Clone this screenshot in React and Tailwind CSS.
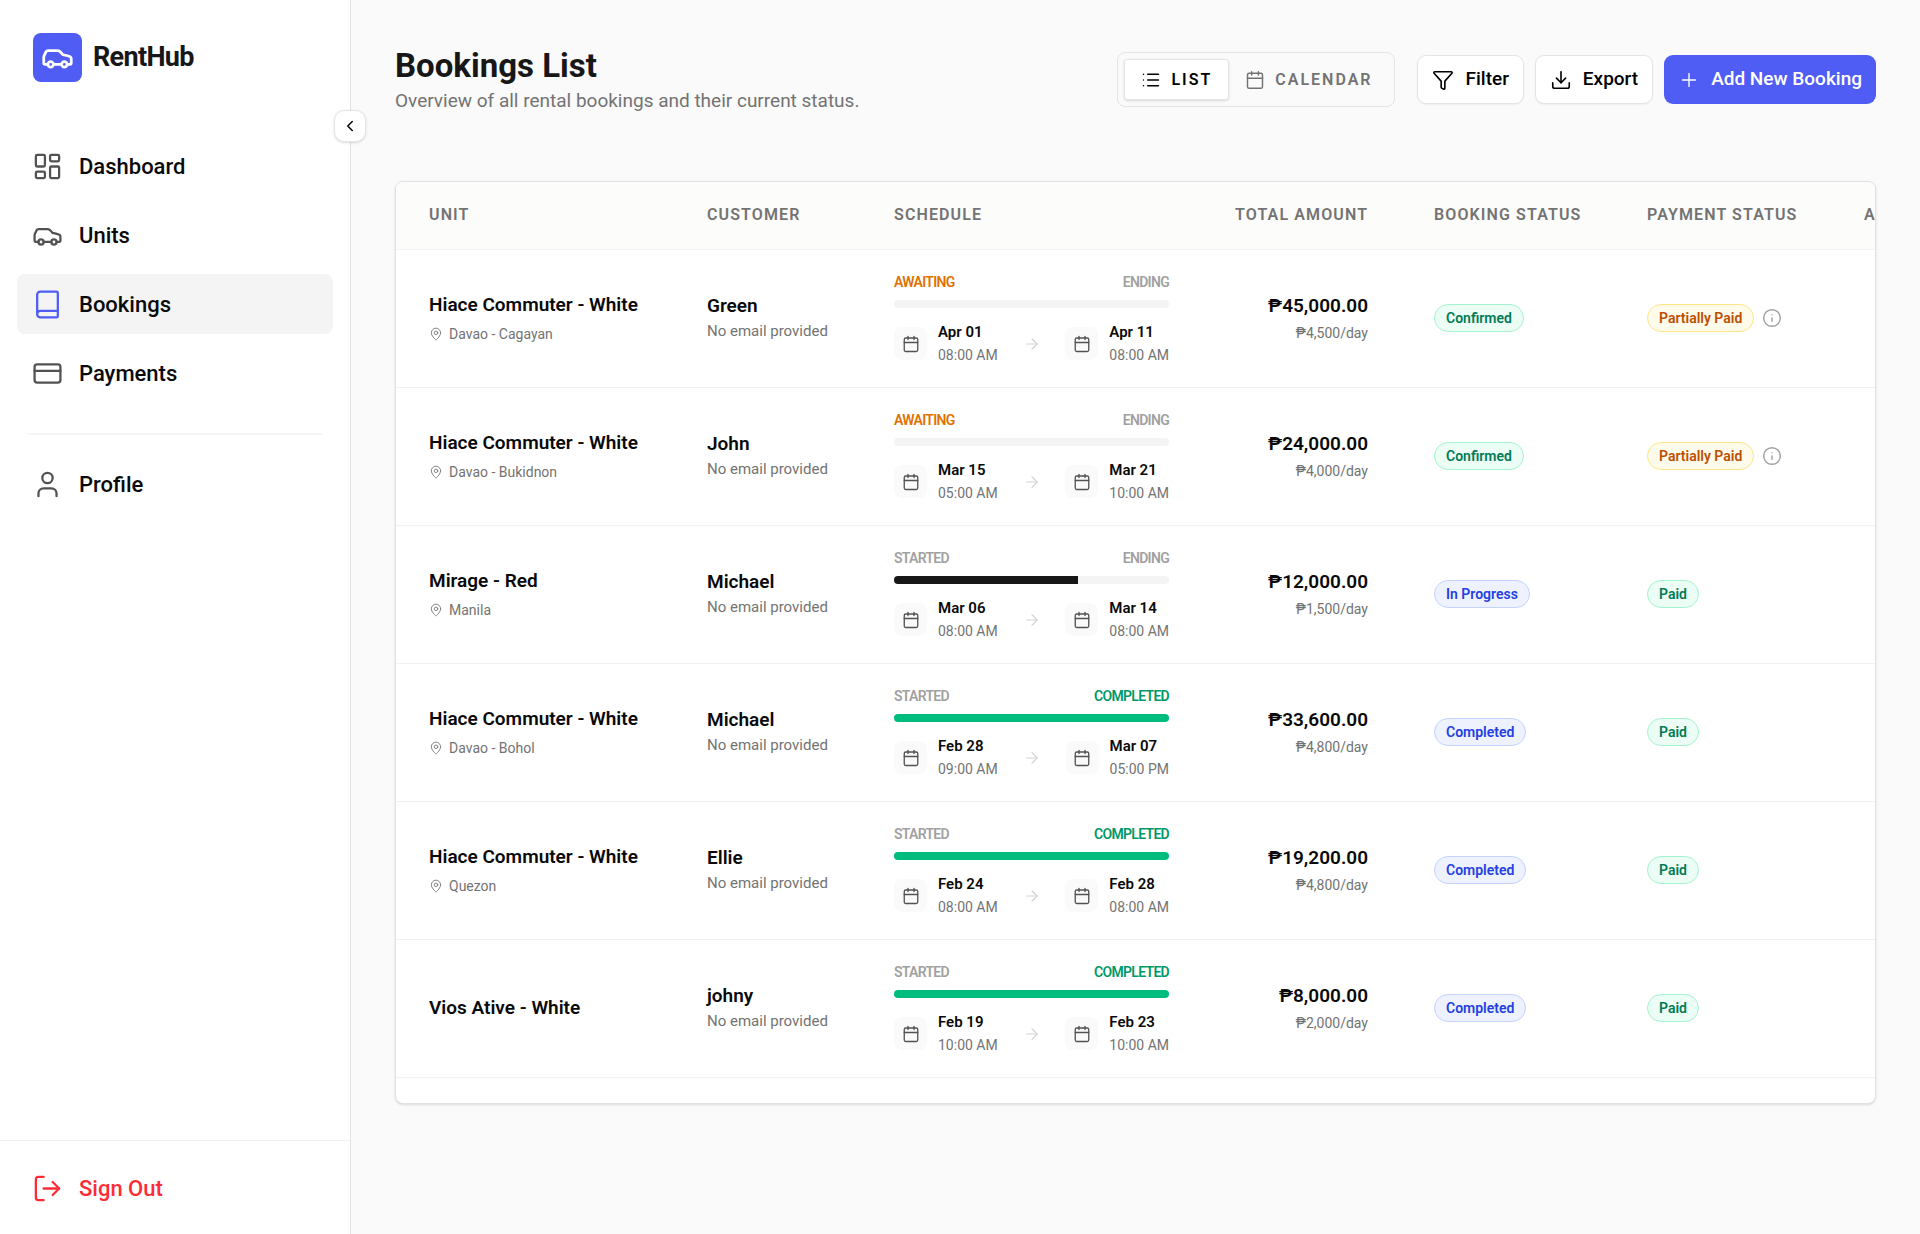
import {
  ArrowRight, Book, Calendar, Car, ChevronLeft, CreditCard, Download, Funnel,
  Info, LayoutDashboard, List, LogOut, MapPin, Plus, User,
} from 'lucide-react';

const navItems = [
  { label: 'Dashboard', icon: LayoutDashboard },
  { label: 'Units', icon: Car },
  { label: 'Bookings', icon: Book, active: true },
  { label: 'Payments', icon: CreditCard },
];

const bookings = [
  { unit: 'Hiace Commuter - White', place: 'Davao - Cagayan', customer: 'Green', state: 'awaiting', progress: 0, from: ['Apr 01', '08:00 AM'], to: ['Apr 11', '08:00 AM'], total: '₱45,000.00', rate: '₱4,500/day', status: 'Confirmed', payment: 'Partially Paid' },
  { unit: 'Hiace Commuter - White', place: 'Davao - Bukidnon', customer: 'John', state: 'awaiting', progress: 0, from: ['Mar 15', '05:00 AM'], to: ['Mar 21', '10:00 AM'], total: '₱24,000.00', rate: '₱4,000/day', status: 'Confirmed', payment: 'Partially Paid' },
  { unit: 'Mirage - Red', place: 'Manila', customer: 'Michael', state: 'started', progress: 67, from: ['Mar 06', '08:00 AM'], to: ['Mar 14', '08:00 AM'], total: '₱12,000.00', rate: '₱1,500/day', status: 'In Progress', payment: 'Paid' },
  { unit: 'Hiace Commuter - White', place: 'Davao - Bohol', customer: 'Michael', state: 'completed', progress: 100, from: ['Feb 28', '09:00 AM'], to: ['Mar 07', '05:00 PM'], total: '₱33,600.00', rate: '₱4,800/day', status: 'Completed', payment: 'Paid' },
  { unit: 'Hiace Commuter - White', place: 'Quezon', customer: 'Ellie', state: 'completed', progress: 100, from: ['Feb 24', '08:00 AM'], to: ['Feb 28', '08:00 AM'], total: '₱19,200.00', rate: '₱4,800/day', status: 'Completed', payment: 'Paid' },
  { unit: 'Vios Ative - White', customer: 'johny', state: 'completed', progress: 100, from: ['Feb 19', '10:00 AM'], to: ['Feb 23', '10:00 AM'], total: '₱8,000.00', rate: '₱2,000/day', status: 'Completed', payment: 'Paid' },
];

const badgeTones = {
  Confirmed: 'border-emerald-200 bg-emerald-50 text-emerald-700',
  Paid: 'border-emerald-200 bg-emerald-50 text-emerald-700',
  'Partially Paid': 'border-amber-200 bg-amber-50 text-amber-700',
  'In Progress': 'border-indigo-200 bg-indigo-50 text-[#2440e0]',
  Completed: 'border-indigo-200 bg-indigo-50 text-[#2440e0]',
};

function NavLink({ label, icon: Icon, active }) {
  return (
    <a
      href="#"
      aria-current={active ? 'page' : undefined}
      className={`flex h-[60px] items-center gap-4 rounded-lg px-[15px] text-[22px] font-medium text-neutral-950 ${active ? 'bg-[#f4f4f4]' : ''}`}
    >
      <Icon size={31} strokeWidth={1.75} className={active ? 'text-[#4f5df5]' : 'text-neutral-600'} />
      {label}
    </a>
  );
}

function Sidebar() {
  return (
    <aside className="relative flex w-[351px] shrink-0 flex-col border-r border-[#e2e2e2] bg-white">
      <div className="flex items-center gap-[11px] px-[33px] pt-[33px]">
        <span className="flex size-[49px] items-center justify-center rounded-lg bg-[#4f5df5] text-white">
          <Car size={33} strokeWidth={2} />
        </span>
        <span className="text-[27px] font-bold tracking-tight text-neutral-900">RentHub</span>
      </div>
      <button
        type="button"
        aria-label="Collapse sidebar"
        className="absolute top-[110px] -right-4 flex size-8 items-center justify-center rounded-[10px] border border-[#e5e5e5] bg-white text-black shadow-sm"
      >
        <ChevronLeft size={18} strokeWidth={2} />
      </button>
      <nav className="mt-[54px] flex flex-col gap-[9px] px-[17px]">
        {navItems.map((item) => <NavLink key={item.label} {...item} />)}
        <hr className="mx-[11px] mt-[21px] mb-[10px] h-[2px] border-0 bg-[#f5f5f5]" />
        <NavLink label="Profile" icon={User} />
      </nav>
      <div className="mt-auto border-t border-[#f0f0f0] px-[17px] pt-[17px] pb-4">
        <button type="button" className="flex h-[60px] w-full items-center gap-4 px-[15px] text-[22px] font-medium text-[#fb2c36]">
          <LogOut size={31} strokeWidth={1.75} />
          Sign Out
        </button>
      </div>
    </aside>
  );
}

function Header() {
  return (
    <header className="flex items-start justify-between gap-6">
      <div className="flex flex-col">
        <h1 className="text-[33px] leading-[43px] font-bold text-neutral-900">Bookings List</h1>
        <p className="text-[19px] leading-7 text-neutral-500">Overview of all rental bookings and their current status.</p>
      </div>
      <div className="flex shrink-0 items-center pt-2">
        <div className="mr-[22px] flex rounded-lg border border-[#e5e5e5] p-[6px] text-base font-semibold tracking-[2px]">
          <button type="button" aria-pressed="true" className="flex h-[41px] items-center gap-[10px] rounded-[3px] border border-[#e5e5e5] bg-white px-4 text-black shadow-sm">
            <List size={20} strokeWidth={1.75} />
            LIST
          </button>
          <button type="button" aria-pressed="false" className="flex h-[41px] items-center gap-[10px] px-4 text-neutral-500">
            <Calendar size={20} strokeWidth={1.75} />
            CALENDAR
          </button>
        </div>
        <div className="flex gap-[11px] text-[19px] font-medium">
          <button type="button" className="flex h-[49px] items-center gap-[11px] rounded-[9px] border border-[#e5e5e5] bg-white px-[14px] text-black shadow-xs">
            <Funnel size={22} strokeWidth={1.75} />
            Filter
          </button>
          <button type="button" className="flex h-[49px] items-center gap-[11px] rounded-[9px] border border-[#e5e5e5] bg-white px-[14px] text-black shadow-xs">
            <Download size={22} strokeWidth={1.75} />
            Export
          </button>
          <button type="button" className="flex h-[49px] items-center gap-[11px] rounded-[9px] bg-[#4f5df5] px-[14px] text-white">
            <Plus size={22} strokeWidth={1.5} />
            Add New Booking
          </button>
        </div>
      </div>
    </header>
  );
}

function Badge({ children }) {
  return (
    <span className={`inline-flex h-7 items-center rounded-full border px-[11px] text-sm font-semibold ${badgeTones[children]}`}>
      {children}
    </span>
  );
}

function DateStop({ value }) {
  return (
    <div className="flex items-center gap-[11px]">
      <span className="flex size-[33px] items-center justify-center rounded-lg bg-[#fafafa] text-neutral-600">
        <Calendar size={18} strokeWidth={1.75} />
      </span>
      <div className="flex flex-col">
        <span className="text-[15px] leading-[22px] font-semibold text-neutral-950">{value[0]}</span>
        <span className="text-sm leading-6 text-neutral-500">{value[1]}</span>
      </div>
    </div>
  );
}

function Schedule({ booking }) {
  const waiting = booking.state === 'awaiting';
  const done = booking.state === 'completed';
  return (
    <div>
      <div className="flex justify-between text-sm leading-[22px] font-semibold tracking-tighter">
        <span className={waiting ? 'text-[#e17100]' : 'text-neutral-400'}>{waiting ? 'AWAITING' : 'STARTED'}</span>
        <span className={done ? 'text-[#009966]' : 'text-neutral-400'}>{done ? 'COMPLETED' : 'ENDING'}</span>
      </div>
      <div className="mt-[7px] h-2 overflow-hidden rounded-full bg-[#f4f4f4]">
        <div
          className={`h-full ${done ? 'bg-[#00bc7d]' : 'bg-neutral-900'}`}
          style={{ width: `${booking.progress}%` }}
        />
      </div>
      <div className="mt-[13px] flex items-center justify-between">
        <DateStop value={booking.from} />
        <ArrowRight size={18} strokeWidth={1.5} className="text-neutral-300" />
        <DateStop value={booking.to} />
      </div>
    </div>
  );
}

function BookingRow({ booking }) {
  return (
    <tr className="border-b border-[#f2f2f2]">
      <td className="px-[33px] whitespace-nowrap">
        <div className="text-[19px] leading-[26px] font-semibold text-neutral-950">{booking.unit}</div>
        {booking.place && (
          <div className="mt-[6px] flex items-center gap-[6px] text-sm leading-5 text-neutral-500">
            <MapPin size={14} strokeWidth={1.5} />
            {booking.place}
          </div>
        )}
      </td>
      <td className="px-[33px] whitespace-nowrap">
        <div className="text-[19px] leading-[26px] font-semibold text-neutral-950">{booking.customer}</div>
        <div className="text-[15px] leading-6 text-neutral-500">No email provided</div>
      </td>
      <td className="px-[33px] pt-[21px] pb-5">
        <Schedule booking={booking} />
      </td>
      <td className="px-[33px] text-right">
        <div className="text-[19px] leading-[26px] font-semibold text-neutral-950">{booking.total}</div>
        <div className="mt-1 text-sm leading-5 text-neutral-500">{booking.rate}</div>
      </td>
      <td className="px-[33px]">
        <div className="flex"><Badge>{booking.status}</Badge></div>
      </td>
      <td className="px-[33px]">
        <div className="flex items-center gap-2">
          <Badge>{booking.payment}</Badge>
          {booking.payment === 'Partially Paid' && <Info size={20} strokeWidth={1.75} className="text-neutral-400" />}
        </div>
      </td>
      <td />
    </tr>
  );
}

function BookingsTable() {
  return (
    <section className="overflow-hidden rounded-lg border border-[#e2e2e2] bg-white pb-[25px] shadow-sm">
      <div className="overflow-x-auto [scrollbar-width:none]">
        <table className="w-[1586px] min-w-full table-fixed border-collapse text-left">
          <thead>
            <tr className="h-[67px] border-b border-[#f2f2f2] bg-[#fcfcfb] text-base tracking-[0.07em] whitespace-nowrap text-neutral-500">
              <th className="w-[278px] px-[33px] font-semibold">UNIT</th>
              <th className="w-[187px] px-[33px] font-semibold">CUSTOMER</th>
              <th className="w-[341px] px-[33px] font-semibold">SCHEDULE</th>
              <th className="w-[199px] px-[33px] text-right font-semibold">TOTAL AMOUNT</th>
              <th className="w-[213px] px-[33px] font-semibold">BOOKING STATUS</th>
              <th className="w-[217px] px-[33px] font-semibold">PAYMENT STATUS</th>
              <th className="w-[151px] px-[33px] font-semibold">ACTIONS</th>
            </tr>
          </thead>
          <tbody>
            {bookings.map((booking) => <BookingRow key={booking.total} booking={booking} />)}
          </tbody>
        </table>
      </div>
    </section>
  );
}

export default function App() {
  return (
    <div className="flex min-h-screen bg-[#fafafa] font-[Roboto,sans-serif] text-neutral-950">
      <Sidebar />
      <main className="flex min-w-0 flex-1 flex-col gap-[66px] p-11">
        <Header />
        <BookingsTable />
      </main>
    </div>
  );
}
